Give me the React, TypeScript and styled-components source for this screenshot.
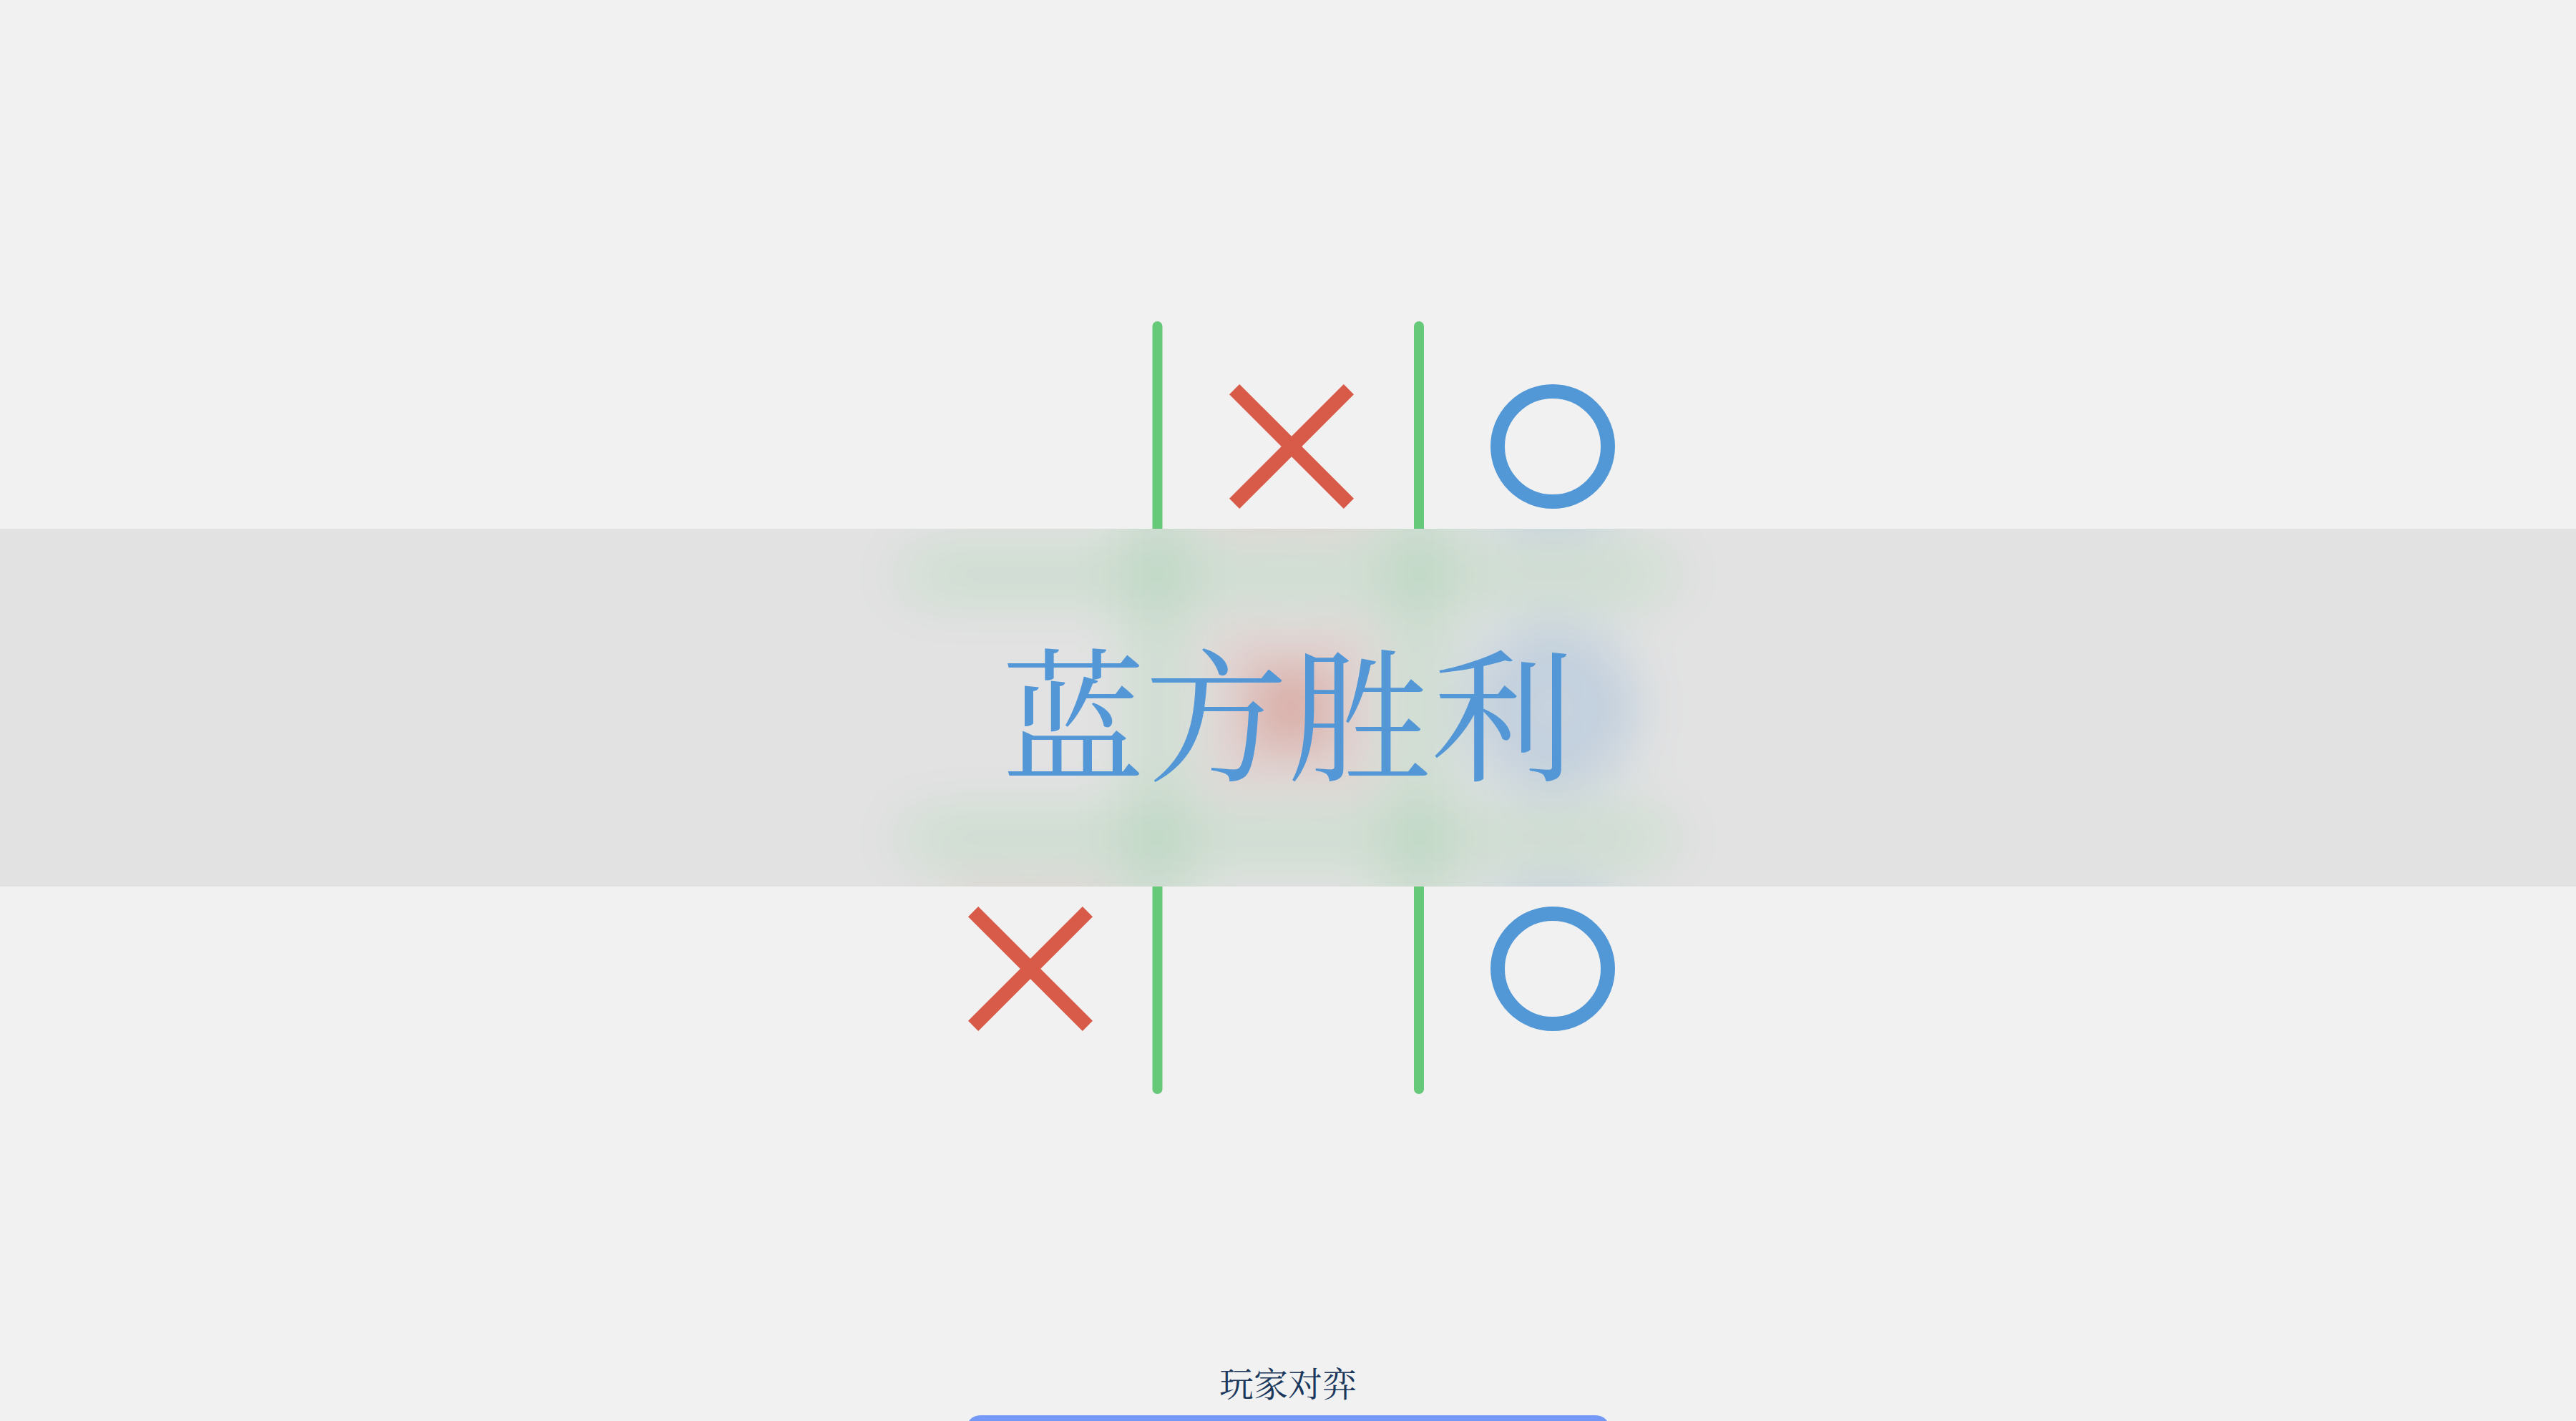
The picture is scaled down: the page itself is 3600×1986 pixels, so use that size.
import React from "react";
import styled, { createGlobalStyle } from "styled-components";

const GlobalStyle = createGlobalStyle`
  html, body {
    margin: 0;
    padding: 0;
    background: #f1f1f1;
  }
  body {
    font-family: "Liberation Serif", serif;
  }
`;

type Mark = "X" | "O" | null;

const cells: Mark[] = [null, "X", "O", null, "X", "O", "X", null, "O"];

const Page = styled.main`
  min-height: 1986px;
  padding-top: 441px;
  display: flex;
  flex-direction: column;
  align-items: center;
  background: #f1f1f1;
`;

const BoardFrame = styled.div`
  position: relative;
  margin-left: 10px;
  width: 1095px;
  height: 1095px;
  display: grid;
  grid-template-columns: repeat(3, 365px);
  grid-template-rows: repeat(3, 365px);
`;

const Lines = styled.svg`
  position: absolute;
  inset: 0;
  pointer-events: none;
`;

const Cell = styled.div`
  display: flex;
  align-items: center;
  justify-content: center;
`;

const Cross = styled.div`
  position: relative;
  width: 174px;
  height: 174px;
  &::before,
  &::after {
    content: "";
    position: absolute;
    left: 50%;
    top: 50%;
    width: 226px;
    height: 20px;
    background: #d85a48;
    transform: translate(-50%, -50%) rotate(45deg);
  }
  &::after {
    transform: translate(-50%, -50%) rotate(-45deg);
  }
`;

const Ring = styled.div`
  box-sizing: border-box;
  width: 174px;
  height: 174px;
  border: 20px solid #5398d6;
  border-radius: 50%;
`;

const ModeLabel = styled.div`
  margin-top: 366px;
  font-family: "Noto Serif CJK SC", "Liberation Serif", serif;
  font-size: 48px;
  line-height: 60px;
  color: #1b385c;
`;

const ModeButton = styled.button`
  margin-top: 16px;
  width: 900px;
  height: 120px;
  border: none;
  border-radius: 20px;
  background: #7398f6;
`;

const ResultBanner = styled.div`
  position: absolute;
  left: 0;
  right: 0;
  top: 739px;
  height: 500px;
  overflow: hidden;
  isolation: isolate;
  display: flex;
  align-items: center;
  justify-content: center;
  &::after {
    content: "";
    position: absolute;
    inset: 0;
    background: rgba(0, 0, 0, 0.058);
  }
`;

const BannerGhost = styled.div`
  position: absolute;
  top: -298px;
  left: -300px;
  right: -300px;
  height: 1095px;
  display: flex;
  justify-content: center;
  background: #f1f1f1;
  filter: blur(46px);
`;

const ResultText = styled.h1`
  position: relative;
  z-index: 1;
  margin: 0;
  font-family: "Noto Serif CJK SC", "Liberation Serif", serif;
  font-weight: 400;
  font-size: 200px;
  line-height: 1;
  color: #5497d6;
  transform: translateY(1px);
`;

function Board() {
  return (
    <BoardFrame>
      {cells.map((m, i) => (
        <Cell key={i}>
          {m === "X" && <Cross />}
          {m === "O" && <Ring />}
        </Cell>
      ))}
      <Lines width="1095" height="1095" viewBox="0 0 1095 1095">
        <g stroke="#66c97a" strokeWidth="14" strokeLinecap="round">
          <line x1="359.5" y1="15" x2="359.5" y2="1081" />
          <line x1="725" y1="15" x2="725" y2="1081" />
          <line x1="9" y1="362" x2="1075" y2="362" />
          <line x1="9" y1="730" x2="1075" y2="730" />
        </g>
      </Lines>
    </BoardFrame>
  );
}

export default function App() {
  return (
    <>
      <GlobalStyle />
      <Page>
        <Board />
        <ModeLabel>玩家对弈</ModeLabel>
        <ModeButton aria-label="开始" />
      </Page>
      <ResultBanner>
        <BannerGhost aria-hidden="true">
          <Board />
        </BannerGhost>
        <ResultText>蓝方胜利</ResultText>
      </ResultBanner>
    </>
  );
}
